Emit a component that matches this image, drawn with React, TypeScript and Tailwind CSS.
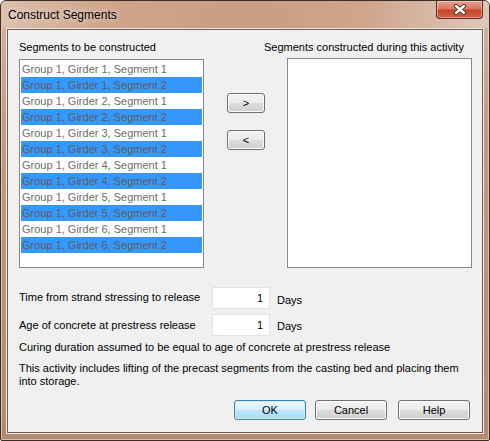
import React from "react";

const ROWS = Array.from({ length: 12 }, (_, i) => ({
  label: `Group 1, Girder ${Math.floor(i / 2) + 1}, Segment ${(i % 2) + 1}`,
  selected: i % 2 === 1,
}));

const btn =
  "h-[20px] rounded-[3px] border border-[#707070] bg-[linear-gradient(to_bottom,#f2f2f2_0%,#ebebeb_50%,#dddddd_50%,#cfcfcf_100%)] shadow-[inset_0_0_0_1px_#fbfbfb] text-[11px] leading-none text-black flex items-center justify-center";

function CloseIcon() {
  return (
    <svg width="14" height="11" viewBox="0 0 14 11">
      <path d="M3 2 L11 9 M11 2 L3 9" stroke="#4a2a22" strokeWidth="4.2" strokeLinecap="round" />
      <path d="M3 2 L11 9 M11 2 L3 9" stroke="#ffffff" strokeWidth="2.4" strokeLinecap="round" />
    </svg>
  );
}

export default function App() {
  return (
    <div className="w-[490px] h-[441px] font-['Liberation_Sans',Arial,sans-serif] text-[11px] text-black">
      <div className="w-full h-full flex flex-col border border-[#3b2e27] rounded-t-[6px] rounded-b-[2px] bg-[linear-gradient(to_bottom,#d6b4a0_0%,#c49a80_30%,#b5896c_100%)] shadow-[inset_0_0_0_1px_rgba(255,255,255,0.45)] overflow-hidden">
        {/* title bar */}
        <div className="h-[27px] flex items-start justify-between bg-[linear-gradient(to_right,#dcc0ae_0%,#cfa68d_20%,#c89d83_50%,#cfa58c_75%,#dfc8ba_100%)]">
          <span className="pl-[7px] pt-[6px] text-[12px] leading-[16px] text-black [text-shadow:0_0_6px_rgba(255,255,255,0.9)]">
            Construct Segments
          </span>
          <div className="mr-[6px] w-[47px] h-[18px] rounded-b-[4px] border border-t-0 border-[#5b2d24] bg-[linear-gradient(to_bottom,#e9a796_0%,#d9735d_45%,#c7452c_55%,#d0603f_100%)] shadow-[inset_0_0_0_1px_rgba(255,220,210,0.5)] flex items-center justify-center">
            <CloseIcon />
          </div>
        </div>

        {/* client area */}
        <div className="flex-1 mx-[5px] mb-[6px] border border-[#f3e9e2]">
          <div className="h-full border border-[#6e5d52] bg-[#f0f0f0] pl-[11px] pt-[10px] flex flex-col">
            {/* labels */}
            <div className="flex h-[14px] leading-[14px]">
              <span className="w-[245px]">Segments to be constructed</span>
              <span>Segments constructed during this activity</span>
            </div>

            <div className="flex items-start mt-[4px]">
              <div className="mt-[1px] w-[185px] h-[209px] border border-[#828790] bg-white p-[1px]">
                {ROWS.map((r) => (
                  <div
                    key={r.label}
                    className={
                      r.selected
                        ? "h-[16px] leading-[16px] bg-[#3399ff] text-[#5e5e5e] pl-[1px] whitespace-nowrap"
                        : "h-[16px] leading-[16px] text-[#6d6d6d] pl-[1px] whitespace-nowrap"
                    }
                  >
                    {r.label}
                  </div>
                ))}
              </div>

              <div className="ml-[23px] mt-[35px] flex flex-col gap-[17px]">
                <div className={`${btn} w-[38px]`}>&gt;</div>
                <div className={`${btn} w-[38px]`}>&lt;</div>
              </div>

              <div className="ml-[22px] w-[185px] h-[210px] border border-[#828790] bg-white" />
            </div>

            {/* parameters */}
            <div className="flex items-start mt-[19px] h-[22px]">
              <span className="w-[193px] mt-[3px] leading-[14px]">Time from strand stressing to release</span>
              <div className="w-[58px] h-[22px] border border-[#e2e3ea] bg-white flex items-center justify-end pr-[6px]">1</div>
              <span className="ml-[7px] mt-[6px] leading-[14px]">Days</span>
            </div>
            <div className="flex items-start mt-[5px] h-[22px]">
              <span className="w-[193px] mt-[4px] leading-[14px]">Age of concrete at prestress release</span>
              <div className="w-[58px] h-[22px] border border-[#e2e3ea] bg-white flex items-center justify-end pr-[6px]">1</div>
              <span className="ml-[7px] mt-[5px] leading-[14px]">Days</span>
            </div>
            <p className="mt-[4px] leading-[14px]">
              Curing duration assumed to be equal to age of concrete at prestress release
            </p>
            <p className="mt-[8px] leading-[13px]">
              This activity includes lifting of the precast segments from the casting bed and placing them
              <br />
              into storage.
            </p>

            {/* buttons */}
            <div className="flex mt-[12px] ml-[215px]">
              <div className="w-[72px] h-[20px] rounded-[3px] border border-[#3c7fb1] bg-[linear-gradient(to_bottom,#eaf6fd_0%,#d9f0fc_50%,#bee6fd_50%,#a7d9f5_100%)] shadow-[inset_0_0_0_1px_#cdeeff] flex items-center justify-center leading-none">
                OK
              </div>
              <div className={`${btn} w-[72px] ml-[9px]`}>Cancel</div>
              <div className={`${btn} w-[72px] ml-[11px]`}>Help</div>
            </div>
          </div>
        </div>
      </div>
    </div>
  );
}
